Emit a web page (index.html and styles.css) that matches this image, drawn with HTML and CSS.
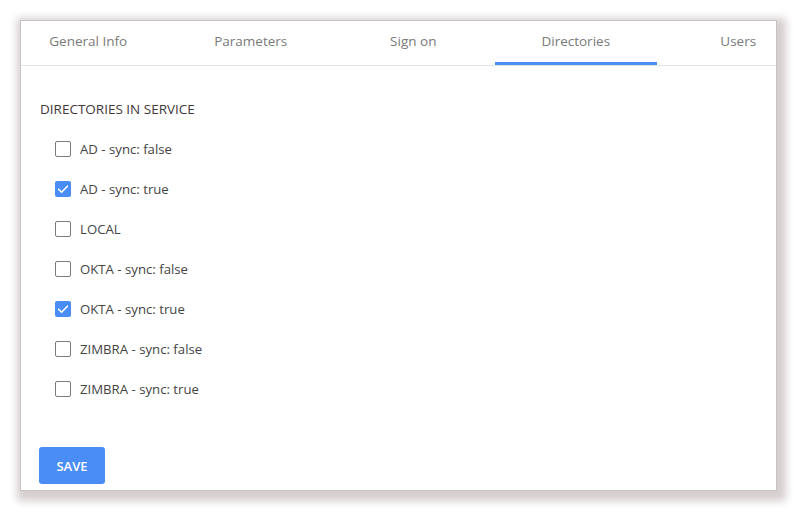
FILE: index.html
```html
<!DOCTYPE html>
<html lang="en">
<head>
<meta charset="utf-8">
<title>Service settings</title>
<link rel="stylesheet" href="styles.css">
</head>
<body>
<div class="card">
  <nav class="tabs">
    <div class="tab-strip">
      <div class="tab">General Info</div>
      <div class="tab">Parameters</div>
      <div class="tab">Sign on</div>
      <div class="tab active">Directories</div>
      <div class="tab">Users</div>
    </div>
  </nav>
  <section class="panel">
    <h3 class="section-title">DIRECTORIES IN SERVICE</h3>
    <ul class="dir-list">
      <li class="dir-row"><span class="box"></span><span class="label">AD - sync: false</span></li>
      <li class="dir-row"><span class="box checked"><svg viewBox="0 0 16 16"><path d="M3.6 8.2l3 3 5.8-6" /></svg></span><span class="label">AD - sync: true</span></li>
      <li class="dir-row"><span class="box"></span><span class="label">LOCAL</span></li>
      <li class="dir-row"><span class="box"></span><span class="label">OKTA - sync: false</span></li>
      <li class="dir-row"><span class="box checked"><svg viewBox="0 0 16 16"><path d="M3.6 8.2l3 3 5.8-6" /></svg></span><span class="label">OKTA - sync: true</span></li>
      <li class="dir-row"><span class="box"></span><span class="label">ZIMBRA - sync: false</span></li>
      <li class="dir-row"><span class="box"></span><span class="label">ZIMBRA - sync: true</span></li>
    </ul>
    <button class="save-btn" type="button">SAVE</button>
  </section>
</div>
</body>
</html>
```
FILE: styles.css
```css
html, body {
  margin: 0;
  padding: 0;
  background: #ffffff;
}

body {
  font-family: "Open Sans", "Noto Sans", sans-serif;
  padding: 20px 20px 20px 20px;
}

.card {
  width: 755px;
  height: 469px;
  border: 1px solid #c6c3c3;
  background: #ffffff;
  box-shadow: 3px 4px 8px 6px #d6cecf;
  display: flex;
  flex-direction: column;
}

.tabs {
  height: 44px;
  border-bottom: 1px solid #e2e2e2;
  overflow: hidden;
}

.tab-strip {
  display: flex;
  margin-left: -14px;
  height: 100%;
}

.tab {
  flex: 0 0 162.5px;
  display: flex;
  align-items: center;
  justify-content: center;
  font-size: 13.5px;
  color: #7a7a7a;
  position: relative;
  padding-bottom: 4px;
  box-sizing: border-box;
}

.tab.active::after {
  content: "";
  position: absolute;
  left: 0;
  right: 0;
  bottom: 0;
  height: 3px;
  background: #4a8df6;
}

.panel {
  padding: 33px 0 0 18px;
  display: flex;
  flex-direction: column;
  align-items: flex-start;
}

.section-title {
  margin: 0 0 10px 1px;
  font-size: 13.5px;
  font-weight: 400;
  line-height: 20px;
  color: #43383b;
}

.dir-list {
  list-style: none;
  margin: 0;
  padding: 0 0 0 16px;
}

.dir-row {
  height: 40px;
  display: flex;
  align-items: center;
  gap: 9px;
}

.box {
  width: 16px;
  height: 16px;
  box-sizing: border-box;
  border: 1.5px solid #7b7b7b;
  border-radius: 2px;
  display: flex;
}

.box.checked {
  border: none;
  background: #4a8df6;
}

.box svg {
  width: 16px;
  height: 16px;
}

.box svg path {
  fill: none;
  stroke: #ffffff;
  stroke-width: 1.6;
  stroke-linecap: round;
  stroke-linejoin: round;
}

.label {
  font-size: 13.2px;
  color: #454545;
}

.save-btn {
  margin-top: 38px;
  width: 66px;
  height: 37px;
  border: none;
  border-radius: 3px;
  background: #4a8df6;
  color: #ffffff;
  font-family: inherit;
  font-size: 13px;
  font-weight: 600;
  padding: 0;
}
```
